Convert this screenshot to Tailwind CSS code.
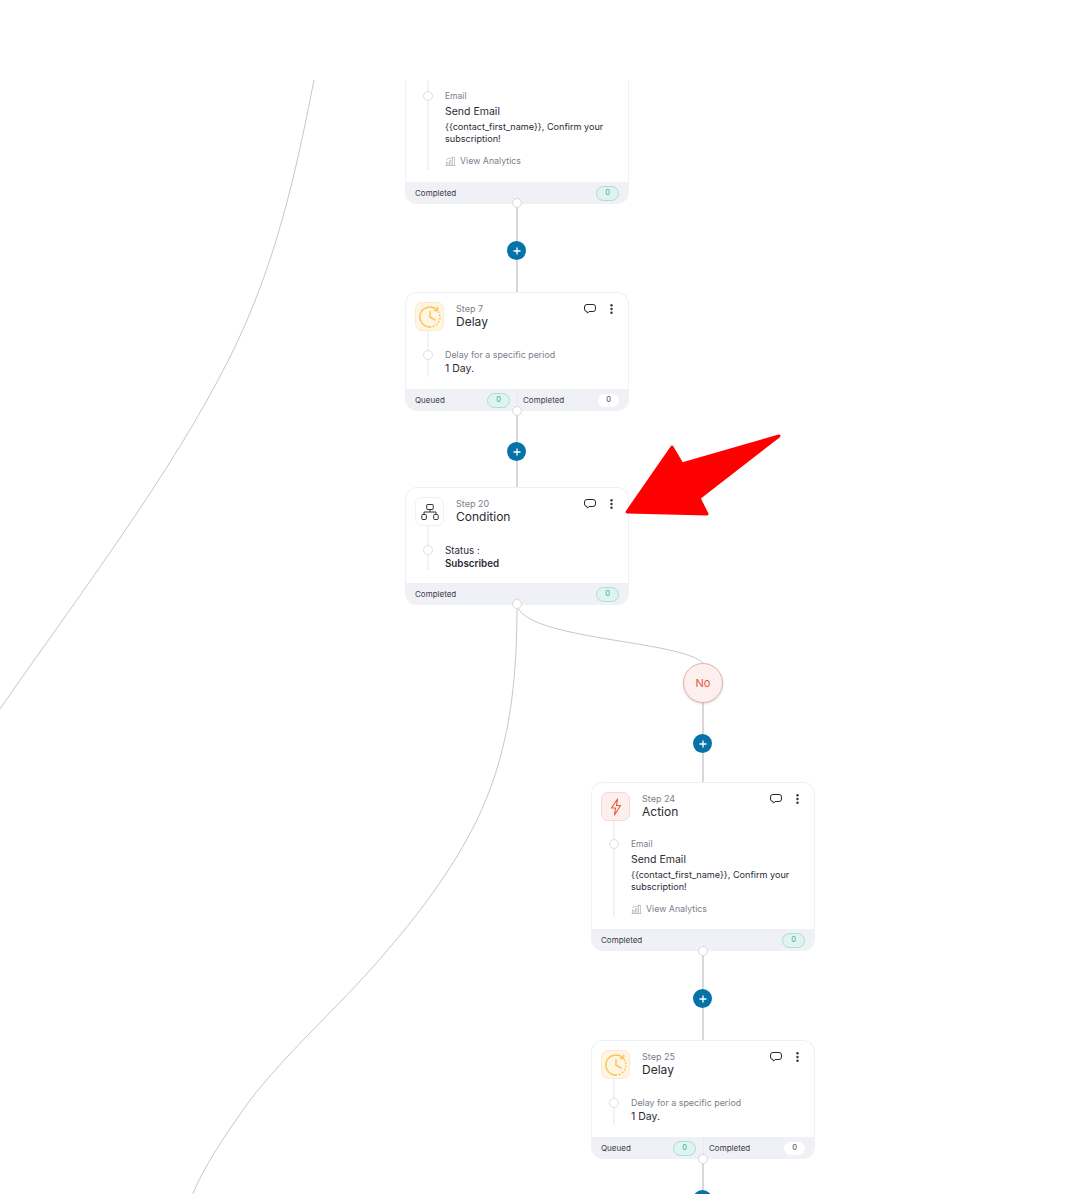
<!DOCTYPE html>
<html lang="en">
<head>
    <meta charset="UTF-8">
    <title>Automation Workflow</title>
    <script src="https://cdn.jsdelivr.net/npm/@tailwindcss/browser@4"></script>
</head>
<body class="bg-white font-['Inter','Liberation_Sans',sans-serif] text-[#2b2b33]">
<div class="relative w-[1086px] h-[1194px] overflow-hidden bg-white">

    <!-- Connectors -->
    <svg class="absolute left-0 top-0" width="1086" height="1194" fill="none">
        <g stroke="#b9b9bd" stroke-width="0.8">
            <path d="M314 80C296 172 276 265 230 357C171.5 474 81 592 0 709"/>
            <path d="M517 605C517 669 512.4 733.6 486.8 797.6C464 854.6 422.7 911 372 968C330 1015 276 1063 243 1110C222 1140 205 1165 192.7 1194"/>
            <path d="M517 605C525 640 680 640 703 663"/>
        </g>
        <g stroke="#cbcbcf" stroke-width="1.5">
            <path d="M517 204V292"/>
            <path d="M517 411V487"/>
            <path d="M703 703V782"/>
            <path d="M703 951V1040"/>
            <path d="M703 1159V1194"/>
        </g>
    </svg>

    <!-- Step: Email (scrolled under the top bar) -->
    <div class="absolute left-[405px] top-[35px] w-[224px] rounded-[12px] border border-b-0 border-[#eff0f5] bg-white">
        <div class="h-[38px]"></div>
        <div class="relative ml-[21px] h-[96px] border-l-2 border-[#f2f2f7] pl-[16px] pt-[16px]">
            <span class="absolute left-[-6px] top-[17px] size-[10px] rounded-full border-[1.5px] border-[#dfdeee] bg-white"></span>
            <p class="text-[8.5px] leading-[12px] text-[#7d7d8b]">Email</p>
            <p class="mt-[2px] mb-[1px] text-[10.5px] leading-[16px] text-[#2b2b33]">Send Email</p>
            <p class="text-[9.1px] leading-[12px] text-[#2b2b33]">{{contact_first_name}}, Confirm your subscription!</p>
            <p class="mt-[10px] flex items-center gap-[4px] text-[8.8px] leading-[12px] text-[#7d7d8b]">
                <svg width="11" height="10" viewBox="0 0 11 10" fill="none" stroke="#b0b0b8" stroke-width="0.7"><path d="M0.5 9.5H10.5M1.5 9.5V6H3V9.5M4.5 9.5V4.5H6V9.5M7.5 9.5V1.5H9.5V9.5M1 4L4 2L6 3L8 0.5"/></svg>
                View Analytics
            </p>
        </div>
        <div class="mt-[12px] flex h-[22px] items-center justify-between rounded-b-[11px] bg-[#f0f1f6] pl-[9px] pr-[9px]">
            <span class="text-[8px] text-[#3a3a44]">Completed</span>
            <span class="flex h-[15px] w-[23px] items-center justify-center rounded-full border border-[#a9dfd0] bg-[#e0f4ef] text-[7.5px] text-[#2fa98c]">0</span>
        </div>
    </div>

    <!-- Step 7 -->
    <div class="absolute left-[405px] top-[292px] w-[224px] rounded-[12px] border border-b-0 border-[#eff0f5] bg-white">
        <div class="relative flex pl-[9px] pt-[9px]">
            <div class="flex size-[29px] items-center justify-center rounded-[7px] border border-[#fbeacb] bg-[#fff5e3]">
                <svg width="24" height="24" viewBox="0 0 24 24" fill="none" stroke="#fcc45f" stroke-width="1.5" stroke-linecap="round" stroke-linejoin="round"><path d="M19 5A10 10 0 1 0 12 22"/><path d="M12 22A10 10 0 0 0 22 12A10 10 0 0 0 20.5 7" stroke-dasharray="0.8 2.6"/><path d="M19.6 2.2V5.4H16.4"/><path d="M12 6.5V12L17 15"/></svg>
            </div>
            <div class="ml-[12px] pt-[1px]">
                <p class="text-[9px] leading-[12px] text-[#7d7d8b]">Step 7</p>
                <p class="text-[12px] leading-[14px] text-[#2b2b33]">Delay</p>
            </div>
            <div class="absolute right-[15px] top-[11px] flex items-center gap-[14px]">
                <svg width="12" height="10" viewBox="0 0 12 10" fill="none" stroke="#26262c"><path d="M3 0.5H9A2.5 2.5 0 0 1 11.5 3V5A2.5 2.5 0 0 1 9 7.5H5L3.5 9.2L3 7.5A2.5 2.5 0 0 1 0.5 5V3A2.5 2.5 0 0 1 3 0.5Z"/></svg>
                <svg width="3" height="10" viewBox="0 0 3 10" fill="#33333a"><circle cx="1.5" cy="1.2" r="1.2"/><circle cx="1.5" cy="5" r="1.2"/><circle cx="1.5" cy="8.8" r="1.2"/></svg>
            </div>
        </div>
        <div class="relative ml-[21px] h-[46px] border-l-2 border-[#f2f2f7] pl-[16px] pt-[18px]">
            <span class="absolute left-[-6px] top-[19px] size-[10px] rounded-full border-[1.5px] border-[#dfdeee] bg-white"></span>
            <p class="text-[8.9px] leading-[12px] text-[#7d7d8b]">Delay for a specific period</p>
            <p class="mt-[1px] text-[10.5px] leading-[14px] text-[#2b2b33]">1 Day.</p>
        </div>
        <div class="mt-[12px] flex h-[22px] rounded-b-[11px] bg-[#f0f1f6]">
            <div class="flex w-[112px] items-center justify-between border-r border-[#e8e9ee] pl-[9px] pr-[7px]">
                <span class="text-[8px] text-[#3a3a44]">Queued</span>
                <span class="flex h-[15px] w-[23px] items-center justify-center rounded-full border border-[#a9dfd0] bg-[#e0f4ef] text-[7.5px] text-[#2fa98c]">0</span>
            </div>
            <div class="flex flex-1 items-center justify-between pl-[5px] pr-[9px]">
                <span class="text-[8px] text-[#3a3a44]">Completed</span>
                <span class="flex h-[13px] w-[21px] items-center justify-center rounded-full bg-white text-[7.5px] text-[#3a3a44]">0</span>
            </div>
        </div>
    </div>

    <!-- Step 20 -->
    <div class="absolute left-[405px] top-[487px] w-[224px] rounded-[12px] border border-b-0 border-[#eff0f5] bg-white">
        <div class="relative flex pl-[9px] pt-[9px]">
            <div class="flex size-[29px] items-center justify-center rounded-[7px] border border-[#f0f0f3] bg-white">
                <svg width="18" height="16" viewBox="0 0 18 16" fill="none" stroke="#33333a" stroke-width="1"><rect x="5.8" y="0.5" width="6.4" height="5" rx="0.5"/><path d="M9 5.5V8M3 10.5V8H15V10.5"/><rect x="0.8" y="10.5" width="4.5" height="5" rx="0.8"/><rect x="12.7" y="10.5" width="4.5" height="5" rx="0.8"/></svg>
            </div>
            <div class="ml-[12px] pt-[1px]">
                <p class="text-[9px] leading-[12px] text-[#7d7d8b]">Step 20</p>
                <p class="text-[12px] leading-[13px] text-[#2b2b33]">Condition</p>
            </div>
            <div class="absolute right-[15px] top-[11px] flex items-center gap-[14px]">
                <svg width="12" height="10" viewBox="0 0 12 10" fill="none" stroke="#26262c"><path d="M3 0.5H9A2.5 2.5 0 0 1 11.5 3V5A2.5 2.5 0 0 1 9 7.5H5L3.5 9.2L3 7.5A2.5 2.5 0 0 1 0.5 5V3A2.5 2.5 0 0 1 3 0.5Z"/></svg>
                <svg width="3" height="10" viewBox="0 0 3 10" fill="#33333a"><circle cx="1.5" cy="1.2" r="1.2"/><circle cx="1.5" cy="5" r="1.2"/><circle cx="1.5" cy="8.8" r="1.2"/></svg>
            </div>
        </div>
        <div class="relative ml-[21px] h-[44px] border-l-2 border-[#f2f2f7] pl-[16px] pt-[18px]">
            <span class="absolute left-[-6px] top-[19px] size-[10px] rounded-full border-[1.5px] border-[#dfdeee] bg-white"></span>
            <p class="text-[9.8px] leading-[13px] text-[#2b2b33]">Status :</p>
            <p class="text-[9.8px] font-semibold leading-[13px] text-[#2b2b33]">Subscribed</p>
        </div>
        <div class="mt-[13px] flex h-[22px] items-center justify-between rounded-b-[11px] bg-[#f0f1f6] pl-[9px] pr-[9px]">
            <span class="text-[8px] text-[#3a3a44]">Completed</span>
            <span class="flex h-[15px] w-[23px] items-center justify-center rounded-full border border-[#a9dfd0] bg-[#e0f4ef] text-[7.5px] text-[#2fa98c]">0</span>
        </div>
    </div>

    <!-- No branch -->
    <div class="absolute left-[683px] top-[663px] flex size-[40px] items-center justify-center rounded-full border-[1.5px] border-[#e2b4b0] bg-[#fdefed] text-[11px] text-[#e9573b] shadow-sm">No</div>

    <!-- Step 24 -->
    <div class="absolute left-[591px] top-[782px] w-[224px] rounded-[12px] border border-b-0 border-[#eff0f5] bg-white">
        <div class="relative flex pl-[9px] pt-[9px]">
            <div class="flex size-[29px] items-center justify-center rounded-[7px] border border-[#f7d9d5] bg-[#fdefed]">
                <svg width="12" height="18" viewBox="0 0 12 18" fill="none" stroke="#e9573b" stroke-width="1.1" stroke-linejoin="round"><path d="M7.5 1L1.5 10H5.5L4.5 17L10.5 7.5H6.5Z"/></svg>
            </div>
            <div class="ml-[12px] pt-[1px]">
                <p class="text-[9px] leading-[12px] text-[#7d7d8b]">Step 24</p>
                <p class="text-[12px] leading-[13px] text-[#2b2b33]">Action</p>
            </div>
            <div class="absolute right-[15px] top-[11px] flex items-center gap-[14px]">
                <svg width="12" height="10" viewBox="0 0 12 10" fill="none" stroke="#26262c"><path d="M3 0.5H9A2.5 2.5 0 0 1 11.5 3V5A2.5 2.5 0 0 1 9 7.5H5L3.5 9.2L3 7.5A2.5 2.5 0 0 1 0.5 5V3A2.5 2.5 0 0 1 3 0.5Z"/></svg>
                <svg width="3" height="10" viewBox="0 0 3 10" fill="#33333a"><circle cx="1.5" cy="1.2" r="1.2"/><circle cx="1.5" cy="5" r="1.2"/><circle cx="1.5" cy="8.8" r="1.2"/></svg>
            </div>
        </div>
        <div class="relative ml-[21px] h-[96px] border-l-2 border-[#f2f2f7] pl-[16px] pt-[17px]">
            <span class="absolute left-[-6px] top-[18px] size-[10px] rounded-full border-[1.5px] border-[#dfdeee] bg-white"></span>
            <p class="text-[8.5px] leading-[12px] text-[#7d7d8b]">Email</p>
            <p class="mt-[2px] mb-[1px] text-[10.5px] leading-[16px] text-[#2b2b33]">Send Email</p>
            <p class="text-[9.1px] leading-[12px] text-[#2b2b33]">{{contact_first_name}}, Confirm your subscription!</p>
            <p class="mt-[10px] flex items-center gap-[4px] text-[8.8px] leading-[12px] text-[#7d7d8b]">
                <svg width="11" height="10" viewBox="0 0 11 10" fill="none" stroke="#b0b0b8" stroke-width="0.7"><path d="M0.5 9.5H10.5M1.5 9.5V6H3V9.5M4.5 9.5V4.5H6V9.5M7.5 9.5V1.5H9.5V9.5M1 4L4 2L6 3L8 0.5"/></svg>
                View Analytics
            </p>
        </div>
        <div class="mt-[12px] flex h-[22px] items-center justify-between rounded-b-[11px] bg-[#f0f1f6] pl-[9px] pr-[9px]">
            <span class="text-[8px] text-[#3a3a44]">Completed</span>
            <span class="flex h-[15px] w-[23px] items-center justify-center rounded-full border border-[#a9dfd0] bg-[#e0f4ef] text-[7.5px] text-[#2fa98c]">0</span>
        </div>
    </div>

    <!-- Step 25 -->
    <div class="absolute left-[591px] top-[1040px] w-[224px] rounded-[12px] border border-b-0 border-[#eff0f5] bg-white">
        <div class="relative flex pl-[9px] pt-[9px]">
            <div class="flex size-[29px] items-center justify-center rounded-[7px] border border-[#fbeacb] bg-[#fff5e3]">
                <svg width="24" height="24" viewBox="0 0 24 24" fill="none" stroke="#fcc45f" stroke-width="1.5" stroke-linecap="round" stroke-linejoin="round"><path d="M19 5A10 10 0 1 0 12 22"/><path d="M12 22A10 10 0 0 0 22 12A10 10 0 0 0 20.5 7" stroke-dasharray="0.8 2.6"/><path d="M19.6 2.2V5.4H16.4"/><path d="M12 6.5V12L17 15"/></svg>
            </div>
            <div class="ml-[12px] pt-[1px]">
                <p class="text-[9px] leading-[12px] text-[#7d7d8b]">Step 25</p>
                <p class="text-[12px] leading-[13px] text-[#2b2b33]">Delay</p>
            </div>
            <div class="absolute right-[15px] top-[11px] flex items-center gap-[14px]">
                <svg width="12" height="10" viewBox="0 0 12 10" fill="none" stroke="#26262c"><path d="M3 0.5H9A2.5 2.5 0 0 1 11.5 3V5A2.5 2.5 0 0 1 9 7.5H5L3.5 9.2L3 7.5A2.5 2.5 0 0 1 0.5 5V3A2.5 2.5 0 0 1 3 0.5Z"/></svg>
                <svg width="3" height="10" viewBox="0 0 3 10" fill="#33333a"><circle cx="1.5" cy="1.2" r="1.2"/><circle cx="1.5" cy="5" r="1.2"/><circle cx="1.5" cy="8.8" r="1.2"/></svg>
            </div>
        </div>
        <div class="relative ml-[21px] h-[46px] border-l-2 border-[#f2f2f7] pl-[16px] pt-[18px]">
            <span class="absolute left-[-6px] top-[19px] size-[10px] rounded-full border-[1.5px] border-[#dfdeee] bg-white"></span>
            <p class="text-[8.9px] leading-[12px] text-[#7d7d8b]">Delay for a specific period</p>
            <p class="mt-[1px] text-[10.5px] leading-[14px] text-[#2b2b33]">1 Day.</p>
        </div>
        <div class="mt-[12px] flex h-[22px] rounded-b-[11px] bg-[#f0f1f6]">
            <div class="flex w-[112px] items-center justify-between border-r border-[#e8e9ee] pl-[9px] pr-[7px]">
                <span class="text-[8px] text-[#3a3a44]">Queued</span>
                <span class="flex h-[15px] w-[23px] items-center justify-center rounded-full border border-[#a9dfd0] bg-[#e0f4ef] text-[7.5px] text-[#2fa98c]">0</span>
            </div>
            <div class="flex flex-1 items-center justify-between pl-[5px] pr-[9px]">
                <span class="text-[8px] text-[#3a3a44]">Completed</span>
                <span class="flex h-[13px] w-[21px] items-center justify-center rounded-full bg-white text-[7.5px] text-[#3a3a44]">0</span>
            </div>
        </div>
    </div>

    <!-- Node handles -->
    <span class="absolute left-[512px] top-[198px] size-[10px] rounded-full border-[1.5px] border-[#d9d9dd] bg-white"></span>
    <span class="absolute left-[512px] top-[406px] size-[10px] rounded-full border-[1.5px] border-[#d9d9dd] bg-white"></span>
    <span class="absolute left-[512px] top-[599px] size-[10px] rounded-full border-[1.5px] border-[#d9d9dd] bg-white"></span>
    <span class="absolute left-[698px] top-[946px] size-[10px] rounded-full border-[1.5px] border-[#d9d9dd] bg-white"></span>
    <span class="absolute left-[698px] top-[1154px] size-[10px] rounded-full border-[1.5px] border-[#d9d9dd] bg-white"></span>

    <!-- Add buttons -->
    <button class="absolute left-[507px] top-[241px] flex size-[19px] items-center justify-center rounded-full bg-[#0673a8]"><svg width="8" height="8" viewBox="0 0 8 8" stroke="#fff" stroke-width="1.3"><path d="M4 0.5V7.5M0.5 4H7.5"/></svg></button>
    <button class="absolute left-[507px] top-[442px] flex size-[19px] items-center justify-center rounded-full bg-[#0673a8]"><svg width="8" height="8" viewBox="0 0 8 8" stroke="#fff" stroke-width="1.3"><path d="M4 0.5V7.5M0.5 4H7.5"/></svg></button>
    <button class="absolute left-[693px] top-[734px] flex size-[19px] items-center justify-center rounded-full bg-[#0673a8]"><svg width="8" height="8" viewBox="0 0 8 8" stroke="#fff" stroke-width="1.3"><path d="M4 0.5V7.5M0.5 4H7.5"/></svg></button>
    <button class="absolute left-[693px] top-[989px] flex size-[19px] items-center justify-center rounded-full bg-[#0673a8]"><svg width="8" height="8" viewBox="0 0 8 8" stroke="#fff" stroke-width="1.3"><path d="M4 0.5V7.5M0.5 4H7.5"/></svg></button>
    <button class="absolute left-[693px] top-[1190px] flex size-[19px] items-center justify-center rounded-full bg-[#0673a8]"><svg width="8" height="8" viewBox="0 0 8 8" stroke="#fff" stroke-width="1.3"><path d="M4 0.5V7.5M0.5 4H7.5"/></svg></button>

    <!-- Annotation arrow -->
    <svg class="absolute left-[620px] top-[430px]" width="170" height="95" viewBox="620 430 170 95" fill="#ff0000" stroke="#ff0000" stroke-width="3" stroke-linejoin="round"><path d="M627 512L672 447L682 464L779 436L699 498L707 514Z"/></svg>

    <!-- Top bar -->
    <div class="absolute left-0 top-0 h-[80px] w-full bg-white"></div>
</div>
</body>
</html>
